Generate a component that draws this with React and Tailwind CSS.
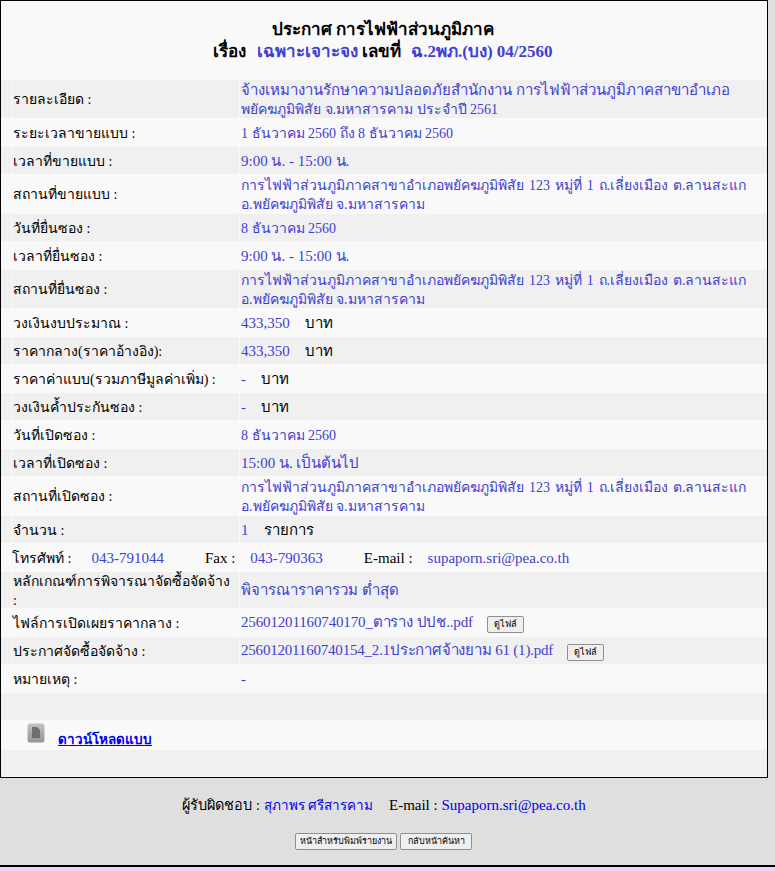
const address = (
  <>
    <span className="text-[14px] [word-spacing:1.4px]">การไฟฟ้าส่วนภูมิภาคสาขาอำเภอพยัคฆภูมิพิสัย 123 หมู่ที่ 1 ถ.เลี่ยงเมือง ต.ลานสะแก</span>
    <br />
    <span className="text-[14px]">อ.พยัคฆภูมิพิสัย จ.มหาสารคาม</span>
  </>
);

const rows = [
  {
    h: "h-[38px]",
    label: "รายละเอียด :",
    value: (
      <>
        จ้างเหมางานรักษาความปลอดภัยสำนักงาน การไฟฟ้าส่วนภูมิภาคสาขาอำเภอ
        <br />
        <span className="text-[14px]">พยัคฆภูมิพิสัย จ.มหาสารคาม ประจำปี 2561</span>
      </>
    ),
  },
  { h: "h-[29px]", label: "ระยะเวลาขายแบบ :", value: <span className="text-[14px]">1 ธันวาคม 2560 ถึง 8 ธันวาคม 2560</span> },
  { h: "h-[27px]", label: "เวลาที่ขายแบบ :", value: "9:00 น. - 15:00 น." },
  { h: "h-[40px]", label: "สถานที่ขายแบบ :", value: address },
  { h: "h-[27px]", label: "วันที่ยื่นซอง :", value: <span className="text-[14px]">8 ธันวาคม 2560</span> },
  { h: "h-[29px]", label: "เวลาที่ยื่นซอง :", value: "9:00 น. - 15:00 น." },
  { h: "h-[38px]", label: "สถานที่ยื่นซอง :", value: address },
  { h: "h-[29px]", label: "วงเงินงบประมาณ :", value: "433,350", unit: "บาท" },
  { h: "h-[27px]", label: "ราคากลาง(ราคาอ้างอิง):", value: "433,350", unit: "บาท" },
  { h: "h-[29px]", label: "ราคาค่าแบบ(รวมภาษีมูลค่าเพิ่ม) :", value: "-", unit: "บาท" },
  { h: "h-[27px]", label: "วงเงินค้ำประกันซอง :", value: "-", unit: "บาท" },
  { h: "h-[29px]", label: "วันที่เปิดซอง :", value: <span className="text-[14px]">8 ธันวาคม 2560</span> },
  { h: "h-[27px]", label: "เวลาที่เปิดซอง :", value: "15:00 น. เป็นต้นไป" },
  { h: "h-[40px]", label: "สถานที่เปิดซอง :", value: address },
  { h: "h-[27px]", label: "จำนวน :", value: "1", unit: "รายการ" },
];

const rowBg = (i) => (i % 2 === 0 ? "bg-[#f0f0f0]" : "bg-[#f9f9f9]");

function Row({ index, h, label, children }) {
  return (
    <div className={`flex ${h} ${rowBg(index)}`}>
      <div className="ml-[10px] flex w-[228px] shrink-0 items-center border-l border-[#f9f9f9] pl-[1px] pt-[1px] text-[14px] leading-[19px] text-black">
        <span>{label}</span>
      </div>
      <div className="flex flex-1 items-center border-l border-[#f9f9f9] pl-[1px] pt-[1px] leading-[19px] text-[#4040d0]">
        <div>{children}</div>
      </div>
    </div>
  );
}

function FileButton() {
  return (
    <button className="ml-[14px] h-[17px] w-[37px] rounded-[2px] border border-[#8f8f8f] bg-[#efefef] align-middle text-[9px] leading-none text-black">
      ดูไฟล์
    </button>
  );
}

function PageButton({ children, w }) {
  return (
    <button className={`h-[17px] ${w} rounded-[2px] border border-[#8f8f8f] bg-[#efefef] text-[9px] leading-none text-black`}>
      {children}
    </button>
  );
}

export default function App() {
  return (
    <div className="flex h-[871px] flex-col bg-[#dfdfdf] font-['Liberation_Serif','Noto_Sans',serif] text-[15px]">
      <div className="h-[778px] w-[768px] shrink-0 border border-black bg-[#f9f9f9]">
        <div className="h-[79px] pr-[2px] pt-[18px] text-center text-[17px] font-bold leading-[22px] text-black">
          <div>ประกาศ การไฟฟ้าส่วนภูมิภาค</div>
          <div>
            เรื่อง <span className="ml-[6px] text-[#4040d0]">เฉพาะเจาะจง</span> เลขที่ <span className="ml-[6px] text-[#4040d0]">ฉ.2พภ.(บง) 04/2560</span>
          </div>
        </div>
        {rows.map((r, i) => (
          <Row key={r.label} index={i} h={r.h} label={r.label}>
            {r.value}
            {r.unit && <span className="ml-[15px] text-black">{r.unit}</span>}
          </Row>
        ))}
        <div className="flex h-[29px] items-center bg-[#f9f9f9] pl-[11px] pt-[1px] text-black">
          <span className="text-[14px]">โทรศัพท์ :</span>
          <span className="ml-[20px] text-[#4040d0]">043-791044</span>
          <span className="ml-[41px]">Fax :</span>
          <span className="ml-[15px] text-[#4040d0]">043-790363</span>
          <span className="ml-[41px]">E-mail :</span>
          <span className="ml-[15px] text-[#4040d0]">supaporn.sri@pea.co.th</span>
        </div>
        <Row
          index={16}
          h="h-[36px]"
          label={
            <>
              หลักเกณฑ์การพิจารณาจัดซื้อจัดจ้าง
              <br />:
            </>
          }
        >
          พิจารณาราคารวม ต่ำสุด
        </Row>
        <Row index={17} h="h-[29px]" label="ไฟล์การเปิดเผยราคากลาง :">
          <span className="tracking-[-0.15px]">25601201160740170_ตาราง ปปช..pdf</span>
          <FileButton />
        </Row>
        <Row index={18} h="h-[27px]" label="ประกาศจัดซื้อจัดจ้าง :">
          <span className="tracking-[-0.2px]">25601201160740154_2.1ประกาศจ้างยาม 61 (1).pdf</span>
          <FileButton />
        </Row>
        <Row index={19} h="h-[29px]" label="หมายเหตุ :">-</Row>
        <div className="h-[27px] bg-[#f0f0f0]" />
        <div className="flex h-[30px] items-start bg-[#f9f9f9] pl-[26px] pt-[3px]">
          <svg width="18" height="20" viewBox="0 0 18 20">
            <defs>
              <linearGradient id="docBg" x1="0" y1="0" x2="0" y2="1">
                <stop offset="0" stopColor="#c4c4c4" />
                <stop offset="1" stopColor="#949494" />
              </linearGradient>
            </defs>
            <rect x="0.5" y="0.5" width="17" height="19" rx="3" fill="url(#docBg)" />
            <path d="M5 4h5l3 3v8H5z" fill="#6f6f6f" />
          </svg>
          <a href="#" className="ml-[13px] mt-[7px] text-[13.5px] font-bold leading-[20px] text-[#0000ee] underline">
            ดาวน์โหลดแบบ
          </a>
        </div>
        <div className="h-[26px] bg-[#f0f0f0]" />
      </div>
      <div className="w-[768px] pt-[17px] text-center text-[15px] leading-[20px] text-black">
        <span className="text-[14.5px]">ผู้รับผิดชอบ : </span>
        <span className="text-[13.5px] text-[#0000ee]">สุภาพร ศรีสารคาม</span>
        <span className="ml-[16px]">E-mail : </span>
        <span className="text-[#0000ee]">Supaporn.sri@pea.co.th</span>
      </div>
      <div className="mt-[17px] flex w-[767px] justify-center gap-[3px]">
        <PageButton w="w-[102px]">หน้าสำหรับพิมพ์รายงาน</PageButton>
        <PageButton w="w-[72px]">กลับหน้าค้นหา</PageButton>
      </div>
      <div className="mt-auto h-[6px] border-t-2 border-black bg-[#f3d0f7]" />
    </div>
  );
}
